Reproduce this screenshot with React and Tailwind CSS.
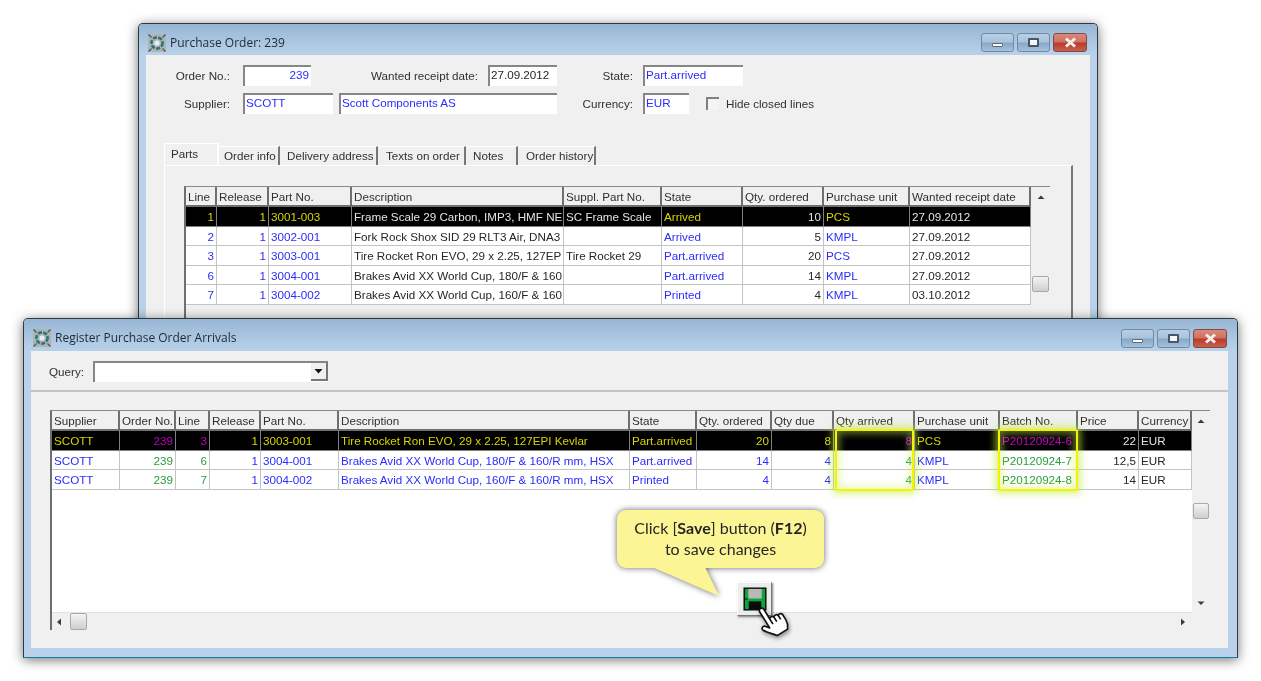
import React from "react";

const PO_COLS = "grid-cols-[31px_52px_83px_212px_98px_81px_81px_86px_121px]";
const ARR_COLS = "grid-cols-[68px_56px_34px_51px_78px_291px_67px_75px_62px_81px_85px_78px_61px_53px]";

const B = "text-[#2b2bff]";
const G = "text-[#2a9d3a]";
const D = "text-[#262626]";
const Y = "text-[#d6d600]";
const M = "text-[#c400c4]";
const W = "text-[#e4e4e4]";

const PO_HEAD = ["Line", "Release", "Part No.", "Description", "Suppl. Part No.", "State", "Qty. ordered", "Purchase unit", "Wanted receipt date"];
const PO_RIGHT = [true, true, false, false, false, false, true, false, false];
const PO_COLORS = [B, B, B, D, D, B, D, B, D];
const PO_SEL = [Y, Y, Y, W, W, Y, W, Y, W];
const PO_ROWS = [
  ["1", "1", "3001-003", "Frame Scale 29 Carbon, IMP3, HMF NE", "SC Frame Scale", "Arrived", "10", "PCS", "27.09.2012"],
  ["2", "1", "3002-001", "Fork Rock Shox SID 29 RLT3 Air, DNA3", "", "Arrived", "5", "KMPL", "27.09.2012"],
  ["3", "1", "3003-001", "Tire Rocket Ron EVO, 29 x 2.25, 127EP", "Tire Rocket 29", "Part.arrived", "20", "PCS", "27.09.2012"],
  ["6", "1", "3004-001", "Brakes Avid XX World Cup, 180/F & 160", "", "Part.arrived", "14", "KMPL", "27.09.2012"],
  ["7", "1", "3004-002", "Brakes Avid XX World Cup, 160/F & 160", "", "Printed", "4", "KMPL", "03.10.2012"],
];

const ARR_HEAD = ["Supplier", "Order No.", "Line", "Release", "Part No.", "Description", "State", "Qty. ordered", "Qty due", "Qty arrived", "Purchase unit", "Batch No.", "Price", "Currency"];
const ARR_RIGHT = [false, true, true, true, false, false, false, true, true, true, false, false, true, false];
const ARR_COLORS = [B, G, G, B, B, B, B, B, B, G, B, G, D, D];
const ARR_SEL = [Y, M, M, Y, Y, Y, Y, Y, Y, M, Y, M, W, W];
const ARR_ROWS = [
  ["SCOTT", "239", "3", "1", "3003-001", "Tire Rocket Ron EVO, 29 x 2.25, 127EPI Kevlar", "Part.arrived", "20", "8", "8", "PCS", "P20120924-6", "22", "EUR"],
  ["SCOTT", "239", "6", "1", "3004-001", "Brakes Avid XX World Cup, 180/F & 160/R mm, HSX", "Part.arrived", "14", "4", "4", "KMPL", "P20120924-7", "12,5", "EUR"],
  ["SCOTT", "239", "7", "1", "3004-002", "Brakes Avid XX World Cup, 160/F & 160/R mm, HSX", "Printed", "4", "4", "4", "KMPL", "P20120924-8", "14", "EUR"],
];

const AppIcon = () => (
  <svg width="18" height="18" viewBox="0 0 18 18" className="shrink-0">
    <rect width="18" height="18" fill="#aeb4b4" />
    <circle cx="9" cy="9" r="5.6" fill="none" stroke="#2c7476" strokeWidth="2.6" strokeDasharray="4 1.4" />
    <circle cx="9" cy="9" r="2.6" fill="#e8ecec" />
    <path d="M0.500 0.500l3 3M17.500 0.500l-3 3M0.500 17.500l3-3M17.500 17.500l-3-3" stroke="#555" strokeWidth="1.300" />
  </svg>
);

const CaptionButton = ({ kind }) => (
  <div
    className={
      kind === "close"
        ? "w-[34px] h-[19px] rounded-[3px] border border-[#7d4a48] flex items-center justify-center bg-[linear-gradient(#d98a7c_0%,#d0705f_48%,#b8392a_52%,#c9604e_100%)]"
        : "w-[33px] h-[19px] rounded-[3px] border border-[#6f8aa6] flex items-center justify-center bg-[linear-gradient(#b9cfe3_0%,#a9c3dc_48%,#86a6c6_52%,#a6c2dc_100%)]"
    }
  >
    {kind === "min" && <div className="w-[11px] h-[4px] mt-[5px] rounded-[1px] bg-white border border-[#5b6b7c]" />}
    {kind === "max" && <div className="w-[11px] h-[9px] bg-white/90 border-2 border-[#47566a] rounded-[1px]" />}
    {kind === "close" && (
      <svg width="13" height="11" viewBox="0 0 13 11">
        <path d="M2 1.500l9 8M11 1.500l-9 8" stroke="#f4eeee" strokeWidth="3" />
      </svg>
    )}
  </div>
);

const Arrow = ({ dir }) => (
  <svg width="8" height="8" viewBox="0 0 8 8" className="shrink-0">
    {dir === "up" && <path d="M0.500 6h7L4 2.500z" fill="#3c3c3c" />}
    {dir === "down" && <path d="M0.500 2.500h7L4 6z" fill="#3c3c3c" />}
    {dir === "left" && <path d="M6 0.500v7L2 4z" fill="#3c3c3c" />}
    {dir === "right" && <path d="M2 0.500v7L6 4z" fill="#3c3c3c" />}
  </svg>
);

const Thumb = ({ className }) => (
  <div className={"rounded-[2px] border border-[#a8a8a8] bg-[linear-gradient(#f4f4f4,#cfcfcf)] " + className} />
);

const Win = ({ title, className, barClass, bodyClass, children }) => (
  <div className={"absolute border border-[#2c3a44] border-b-[#0f7f96] rounded-t-[5px] bg-[#b9d1ea] shadow-[0_2px_12px_rgba(0,0,0,0.55)] overflow-hidden flex flex-col " + className}>
    <div className={"shrink-0 flex items-center pt-[6px] pl-[9px] pr-[10px] bg-[linear-gradient(#97b6d4,#b9d2ea)] font-['Open_Sans',sans-serif] text-[12px] text-[#1e2a33] " + barClass}>
      <AppIcon />
      <span className="ml-[4px]">{title}</span>
      <div className="ml-auto flex gap-[3px]">
        <CaptionButton kind="min" />
        <CaptionButton kind="max" />
        <CaptionButton kind="close" />
      </div>
    </div>
    <div className={"flex-1 min-h-0 ml-[7px] bg-[#f0f0f0] overflow-hidden relative " + bodyClass}>{children}</div>
  </div>
);

const Label = ({ className, children }) => (
  <div className={"text-right text-[#303030] leading-[21px] " + className}>{children}</div>
);

const Field = ({ className, children, right, dark }) => (
  <div
    className={
      "h-[21px] bg-white border-t-2 border-l-2 border-[#868686] px-[1px] leading-[16px] whitespace-nowrap " +
      (right ? "text-right pr-[2px] " : "") +
      (dark ? "text-[#262626] " : "text-[#2b2bff] ") +
      className
    }
  >
    {children}
  </div>
);

const Tab = ({ className, children }) => (
  <div className={"h-[19px] border-r-2 border-[#777] border-t border-t-white leading-[18px] text-[#303030] whitespace-nowrap " + className}>
    {children}
  </div>
);

const GridTable = ({ cols, head, rows, right, colors, selColors }) => (
  <div>
    <div className={"grid h-[20px] bg-[#f0f0f0] " + cols}>
      {head.map((h) => (
        <div key={h} className="border-r-2 border-b-2 border-[#6f6f6f] pl-[2px] leading-[20px] text-[#303030] whitespace-nowrap overflow-hidden">
          {h}
        </div>
      ))}
    </div>
    {rows.map((row, r) => (
      <div key={r} className={"grid h-[19.6px] " + cols + (r === 0 ? " bg-black" : " bg-white")}>
        {row.map((cell, c) => (
          <div
            key={c}
            className={
              "border-r border-b whitespace-nowrap overflow-hidden px-[2px] leading-[19.6px] " +
              (r === 0 ? "border-[#808080] " : "border-[#c4c4c4] ") +
              (right[c] ? "text-right " : "") +
              (r === 0 ? selColors[c] : colors[c])
            }
          >
            {cell}
          </div>
        ))}
      </div>
    ))}
  </div>
);

const Highlight = ({ className }) => (
  <div className={"absolute top-[18px] h-[62px] border-2 border-[#f4f400] rounded-[2px] shadow-[0_0_7px_3px_rgba(190,235,60,0.6),inset_0_0_7px_3px_rgba(210,240,90,0.45)] " + className} />
);

const FloppyIcon = () => (
  <svg width="24" height="24" viewBox="0 0 25 25">
    <rect x="0.500" y="0.500" width="24" height="24" fill="#0b0b0b" />
    <rect x="2" y="2" width="21" height="21" fill="#0da53a" />
    <rect x="5.500" y="2" width="14" height="10" fill="#b9b9b9" />
    <rect x="6" y="15" width="13" height="8" fill="#0b0b0b" />
    <rect x="2" y="12" width="3" height="1" fill="#0b0b0b" />
  </svg>
);

const HandCursor = () => (
  <svg width="36" height="38" viewBox="0 0 24 25" className="absolute left-[754px] top-[602px] drop-shadow-[1px_2px_2px_rgba(0,0,0,0.45)]">
    <g transform="rotate(-32 12 12)" fill="#fff" stroke="#111" strokeWidth="1.100" strokeLinejoin="round">
      <path d="M8 3a1.600 1.600 0 0 1 3.200 0v7.500c.3-1.100 3-1.100 3 .5c.3-1.100 3-1 3 .6c.4-.9 2.800-.7 2.800.9v4c0 3-1.300 4.600-2.300 6H9.500c-1-1.500-5-6-6-8c-.7-1.500 1-2.800 2.500-1.600L8 15.500Z" />
      <path d="M11.200 10.500v4M14.200 11v3.500M17.200 11.600v3" fill="none" />
    </g>
  </svg>
);

export default function App() {
  return (
    <div className="relative w-[1261px] h-[681px] overflow-hidden bg-white blur-[0.35px] font-['Liberation_Sans',sans-serif] text-[11.65px]">
      {/* back window */}
      <Win title="Purchase Order: 239" className="left-[138px] top-[23px] w-[960px] h-[305px]" barClass="h-[31px]" bodyClass="mr-[7px] mb-[8px]">
        <div className="flex pt-[10px]">
          <Label className="w-[84px]">Order No.:</Label>
          <Field right className="w-[68px] ml-[13px]">239</Field>
          <Label className="w-[167px]">Wanted receipt date:</Label>
          <Field dark className="w-[69px] ml-[10px]">27.09.2012</Field>
          <Label className="w-[76px]">State:</Label>
          <Field className="w-[100px] ml-[10px]">Part.arrived</Field>
        </div>
        <div className="flex mt-[7px] items-start">
          <Label className="w-[84px]">Supplier:</Label>
          <Field className="w-[90px] ml-[13px]">SCOTT</Field>
          <Field className="w-[218px] ml-[6px]">Scott Components AS</Field>
          <Label className="w-[76px]">Currency:</Label>
          <Field className="w-[46px] ml-[10px]">EUR</Field>
          <div className="w-[13px] h-[13px] ml-[17px] mt-[4px] bg-[#f4f4f4] border-t-2 border-l-2 border-[#808080] shrink-0" />
          <div className="ml-[7px] leading-[21px] text-[#303030]">Hide closed lines</div>
        </div>
        <div className="flex items-end ml-[18px] mt-[29px] h-[22px]">
          <div className="w-[55px] h-[22px] border-r-2 border-[#777] border-t border-l border-white pl-[6px] pt-[1px] leading-[18px] text-[#303030]">Parts</div>
          <Tab className="w-[61px] pl-[5px]">Order info</Tab>
          <Tab className="w-[98px] pl-[7px]">Delivery address</Tab>
          <Tab className="w-[88px] pl-[8px]">Texts on order</Tab>
          <Tab className="w-[52px] pl-[7px]">Notes</Tab>
          <Tab className="w-[78px] pl-[8px]">Order history</Tab>
        </div>
        <div className="ml-[18px] w-[909px] h-[200px] border-t border-l border-white border-r-2 border-r-[#777] pl-[19px] pt-[20px]">
          <div className="flex w-[866px] h-[160px] border-t border-l-2 border-[#6f6f6f] border-t-[#8a8a8a]">
            <GridTable cols={PO_COLS} head={PO_HEAD} rows={PO_ROWS} right={PO_RIGHT} colors={PO_COLORS} selColors={PO_SEL} />
            <div className="w-[19px] flex flex-col items-center pt-[6px]">
              <Arrow dir="up" />
              <Thumb className="w-[17px] h-[16px] mt-[75px]" />
            </div>
          </div>
        </div>
      </Win>

      {/* front window */}
      <Win title="Register Purchase Order Arrivals" className="left-[23px] top-[318px] w-[1215px] h-[340px]" barClass="h-[32px]" bodyClass="mr-[9px] mb-[9px]">
        <div className="flex h-[41px] pt-[10px] pl-[18px] border-b-2 border-[#c4c4c4]">
          <div className="w-[44px] leading-[21px] text-[#303030]">Query:</div>
          <div className="w-[235px] h-[21px] bg-white border-t-2 border-l-2 border-[#868686] flex justify-end">
            <div className="w-[17px] h-[18px] bg-[#f0f0f0] border-r-2 border-b-2 border-[#777] flex items-center justify-center">
              <svg width="9" height="6" viewBox="0 0 9 6"><path d="M0.500 1h8L4.500 5.500z" fill="#111" /></svg>
            </div>
          </div>
        </div>
        <div className="ml-[19px] mt-[18px] w-[1160px] h-[220px] relative flex border-t border-l-2 border-[#6f6f6f] border-t-[#8a8a8a] bg-[#f0f0f0]">
          <div className="w-[1140px] flex flex-col">
            <div className="flex-1 bg-white">
              <GridTable cols={ARR_COLS} head={ARR_HEAD} rows={ARR_ROWS} right={ARR_RIGHT} colors={ARR_COLORS} selColors={ARR_SEL} />
            </div>
            <div className="h-[18px] flex items-center border-t border-[#e2e2e2] pl-[3px]">
              <Arrow dir="left" />
              <Thumb className="w-[17px] h-[17px] ml-[7px]" />
              <div className="ml-auto mr-[5px]">
                <Arrow dir="right" />
              </div>
            </div>
          </div>
          <div className="w-[18px] flex flex-col items-center pt-[6px] pb-[23px]">
            <Arrow dir="up" />
            <Thumb className="w-[16px] h-[16px] mt-[78px]" />
            <div className="mt-auto">
              <Arrow dir="down" />
            </div>
          </div>
          <Highlight className="left-[783px] w-[79px]" />
          <Highlight className="left-[946px] w-[80px]" />
        </div>
      </Win>

      {/* callout */}
      <div className="absolute left-[617px] top-[510px] drop-shadow-[0_0_3px_rgba(0,0,0,0.6)]">
        <div className="w-[207px] h-[58px] pb-[2px] rounded-[9px] bg-[#fcf595] flex flex-col items-center justify-center font-['Lato',sans-serif] text-[16px] leading-[21px] text-[#262626]">
          <div>Click [<b>Save</b>] button (<b>F12</b>)</div>
          <div>to save changes</div>
        </div>
        <svg width="70" height="30" viewBox="0 0 70 30" className="absolute left-[35px] top-[57px]">
          <path d="M0 0H53L67 29Z" fill="#fcf595" />
        </svg>
      </div>

      {/* save button */}
      <div className="absolute left-[737px] top-[582px] w-[35px] h-[34px] bg-[#ececec] border border-t-white border-l-white border-r-[#777] border-b-[#777] shadow-[1px_1px_2px_rgba(0,0,0,0.5)] flex items-center justify-center">
        <FloppyIcon />
      </div>
      <HandCursor />
    </div>
  );
}
